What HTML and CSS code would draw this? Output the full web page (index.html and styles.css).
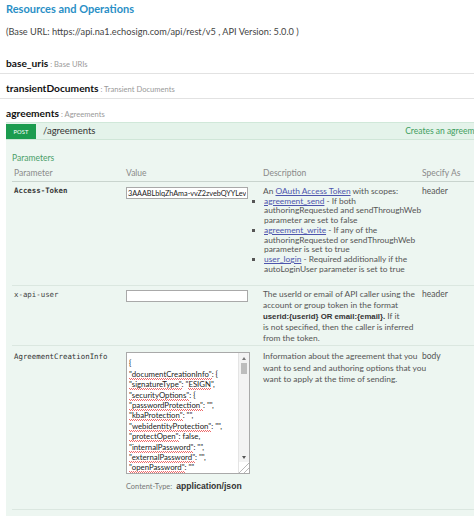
FILE: index.html
```html
<!DOCTYPE html>
<html lang="en">
<head>
<meta charset="utf-8">
<title>Resources and Operations</title>
<link rel="stylesheet" href="styles.css">
</head>
<body>
<div class="page">
  <h2 class="title">Resources and Operations</h2>
  <p class="base">(Base URL: https://api.na1.echosign.com/api/rest/v5 , API Version: 5.0.0 )</p>
  <ul class="resources">
    <li class="res"><div class="res-head"><span class="res-name">base_uris</span><span class="res-desc"> : Base URIs</span></div></li>
    <li class="res"><div class="res-head"><span class="res-name">transientDocuments</span><span class="res-desc"> : Transient Documents</span></div></li>
    <li class="res res-open">
      <div class="res-head"><span class="res-name">agreements</span><span class="res-desc"> : Agreements</span></div>
      <div class="op">
        <div class="op-head">
          <span class="verb">POST</span>
          <span class="path">/agreements</span>
          <span class="summary">Creates an agreement. Sends it out for signatures</span>
        </div>
        <div class="op-body">
          <h4 class="params-title">Parameters</h4>
          <table class="params">
            <colgroup>
              <col class="c-name"><col class="c-value"><col class="c-desc"><col class="c-spec">
            </colgroup>
            <thead>
              <tr><th>Parameter</th><th>Value</th><th>Description</th><th>Specify As</th></tr>
            </thead>
            <tbody>
              <tr class="row-token">
                <td class="pname req">Access-Token</td>
                <td><input class="field" type="text" value="3AAABLblqZhAma-vvZ2zvebQYYLev"></td>
                <td class="desc">
                  <p class="d-line">An <a class="lnk" href="#">OAuth Access Token</a> with scopes:</p>
                  <ul class="scopes">
                    <li><a class="lnk" href="#">agreement_send</a> - If both<br>authoringRequested and sendThroughWeb<br>parameter are set to false</li>
                    <li><a class="lnk" href="#">agreement_write</a> - If any of the<br>authoringRequested or sendThroughWeb<br>parameter is set to true</li>
                    <li><a class="lnk" href="#">user_login</a> - Required additionally if the<br>autoLoginUser parameter is set to true</li>
                  </ul>
                </td>
                <td class="spec">header</td>
              </tr>
              <tr class="row-user">
                <td class="pname">x-api-user</td>
                <td><input class="field field-user" type="text" value=""></td>
                <td class="desc desc-loose">The userId or email of API caller using the<br>account or group token in the format<br><b class="fmt">userid:{userid} OR email:{email}.</b> If it<br>is not specified, then the caller is inferred<br>from the token.</td>
                <td class="spec">header</td>
              </tr>
              <tr class="row-body">
                <td class="pname req-soft">AgreementCreationInfo</td>
                <td>
                  <div class="textarea">
                    <div class="json">{
<span class="sp">"documentCreationInfo"</span>: {
<span class="sp">"signatureType"</span>: "<span class="sp">ESIGN</span>",
<span class="sp">"securityOptions"</span>: {
<span class="sp">"passwordProtection"</span>: "",
<span class="sp">"kbaProtection"</span>: "",
<span class="sp">"webidentityProtection"</span>: "",
<span class="sp">"protectOpen"</span>: false,
<span class="sp">"internalPassword"</span>: "",
<span class="sp">"externalPassword"</span>: "",
<span class="sp">"openPassword"</span>: ""</div>
                    <div class="vscroll">
                      <span class="sb-btn sb-up"><i class="tri tri-up"></i></span>
                      <span class="sb-track"><span class="sb-thumb"></span></span>
                      <span class="sb-btn sb-down"><i class="tri tri-down"></i></span>
                      <span class="sb-grip"></span>
                    </div>
                  </div>
                  <div class="ctype"><span class="ctype-label">Content-Type:</span> <span class="ctype-val">application/json</span></div>
                </td>
                <td class="desc desc-body">Information about the agreement that you<br>want to send and authoring options that you<br>want to apply at the time of sending.</td>
                <td class="spec">body</td>
              </tr>
            </tbody>
          </table>
        </div>
      </div>
    </li>
  </ul>
</div>
</body>
</html>
```

FILE: styles.css
```css
* { box-sizing: border-box; }

html, body {
  margin: 0;
  padding: 0;
  background: #ffffff;
  overflow: hidden;
}

body {
  width: 474px;
  height: 516px;
  font-family: Lato, "Open Sans", sans-serif;
  color: #333333;
}

.page {
  width: 474px;
  height: 516px;
  overflow: hidden;
}

.title {
  margin: 0;
  padding: 2px 6px 0;
  font-size: 11px;
  line-height: 14px;
  font-weight: 700;
  color: #2a8fc6;
}

.base {
  margin: 10px 0 0;
  padding: 0 6px;
  font-size: 9.2px;
  line-height: 12px;
  color: #444444;
  white-space: nowrap;
}

.resources {
  list-style: none;
  margin: 11px 0 0;
  padding: 0;
}

.res {
  border-bottom: 1px solid #e2e2e2;
}

.res-head {
  padding: 0 6px;
  height: 24px;
  line-height: 24px;
  white-space: nowrap;
}

.res-name {
  font-size: 10.2px;
  font-weight: 700;
  color: #111111;
}

.res-desc {
  font-size: 7.6px;
  color: #9a9a9a;
}

.res-open {
  border-bottom: none;
}

.res-open .res-head {
  height: 23px;
  line-height: 23px;
}

.op {
  margin-left: 6px;
  width: 590px;
}

.op-head {
  display: flex;
  align-items: stretch;
  height: 18px;
  background: #e4f3ea;
  border-top: 1px solid #d0e8d9;
  border-bottom: 1px solid #cfe6d7;
  white-space: nowrap;
}

.verb {
  width: 30px;
  margin-top: 1px;
  display: flex;
  align-items: center;
  justify-content: center;
  background: #1c9c4f;
  color: #ffffff;
  font-size: 5.8px;
  letter-spacing: 0.1px;
}

.path {
  margin-left: 7px;
  font-size: 9.5px;
  line-height: 16px;
  color: #333333;
}

.summary {
  margin-left: auto;
  padding-right: 8px;
  font-size: 8.5px;
  line-height: 16px;
  color: #3f9e60;
}

.op-body {
  background: #edf6f1;
  padding: 12px 6px 0;
  height: 400px;
}

.params-title {
  margin: 0;
  font-size: 8.5px;
  line-height: 12px;
  font-weight: 400;
  color: #4a9e68;
}

.params {
  margin-top: 2px;
  border-collapse: collapse;
  table-layout: fixed;
  width: 552px;
}

.c-name { width: 112px; }
.c-value { width: 137px; }
.c-desc { width: 159px; }
.c-spec { width: 144px; }

.params th {
  font-weight: 400;
  color: #8a8a8a;
  font-size: 8.5px;
  text-align: left;
  padding: 0 2px;
  height: 15px;
  line-height: 15px;
  border-bottom: 1px solid #c9d4ce;
}

.params td {
  vertical-align: top;
  padding: 4px 2px;
  border-bottom: 1px solid #dbe7e0;
}

.pname {
  font-family: "DejaVu Sans Mono", "Liberation Mono", monospace;
  font-size: 7.4px;
  line-height: 10px;
  color: #444444;
  white-space: nowrap;
}

.req { font-weight: 700; color: #3a3a3a; }
.req-soft { color: #333333; }

.field {
  display: block;
  margin: 1px 0 0;
  width: 122px;
  height: 12px;
  padding: 0 1px;
  border: 1px solid #a9a9a9;
  background: #ffffff;
  font-family: Lato, "Open Sans", sans-serif;
  font-size: 7.3px;
  letter-spacing: -0.05px;
  color: #222222;
  outline: none;
}

.desc {
  font-size: 8.4px;
  line-height: 9.7px;
  color: #555555;
  white-space: nowrap;
}

.row-token .desc { padding-top: 5px; }

.d-line { margin: 0; }

.scopes {
  margin: 0 0 7px;
  padding: 0 0 0 1px;
  list-style: square outside;
}

.lnk {
  color: #4d55ad;
  text-decoration: underline;
}

.spec {
  font-size: 8.5px;
  line-height: 10px;
  color: #555555;
  padding-left: 2px;
}

.row-user td { padding-top: 3px; padding-bottom: 1px; }
.row-user .pname { line-height: 11px; }
.row-user .spec { line-height: 11px; }

.desc-loose { line-height: 11px; }
.desc-body { line-height: 11.5px; }

.fmt {
  font-family: "Liberation Sans", Arial, sans-serif;
  font-weight: 700;
  font-size: 7.8px;
  color: #333333;
}

.row-body td { padding-top: 5px; padding-bottom: 16px; }
.row-body .pname { line-height: 11px; }
.row-body .spec { line-height: 11px; }

.textarea {
  position: relative;
  margin-top: 1px;
  width: 124px;
  height: 122px;
  border: 1px solid #a9a9a9;
  background: #ffffff;
}

.json {
  height: 100%;
  padding: 5px 13px 0 2px;
  overflow: hidden;
  white-space: pre;
  font-size: 7.8px;
  line-height: 10.4px;
  color: #222222;
}

.sp {
  background-image:
    linear-gradient(45deg, transparent 38%, #ec6a6a 38% 62%, transparent 62%),
    linear-gradient(-45deg, transparent 38%, #ec6a6a 38% 62%, transparent 62%);
  background-size: 2px 2px, 2px 2px;
  background-position: 0 100%, 1px 100%;
  background-repeat: repeat-x;
  padding-bottom: 1px;
}

.vscroll {
  position: absolute;
  top: 0;
  right: 0;
  bottom: 0;
  width: 11px;
  display: flex;
  flex-direction: column;
  background: #f3f3f3;
  border-left: 1px solid #e4e4e4;
}

.sb-btn {
  height: 10px;
  display: flex;
  align-items: center;
  justify-content: center;
}

.tri {
  width: 0;
  height: 0;
  border-left: 2px solid transparent;
  border-right: 2px solid transparent;
}

.tri-up { border-bottom: 3px solid #777777; }
.tri-down { border-top: 3px solid #555555; }

.sb-track {
  flex: 1;
  padding: 0 2px;
}

.sb-thumb {
  display: block;
  height: 11px;
  background: #bdbdbd;
}

.sb-grip {
  height: 11px;
  background: #ffffff linear-gradient(135deg, transparent 50%, #b9b9b9 50% 57%, transparent 57% 72%, #b9b9b9 72% 79%, transparent 79%);
}

.ctype {
  margin-top: 3px;
  line-height: 12px;
  white-space: nowrap;
}

.ctype-label {
  font-size: 7.4px;
  color: #777777;
}

.ctype-val {
  font-family: "Liberation Sans", Arial, sans-serif;
  font-weight: 700;
  font-size: 8.6px;
  color: #333333;
}
```
